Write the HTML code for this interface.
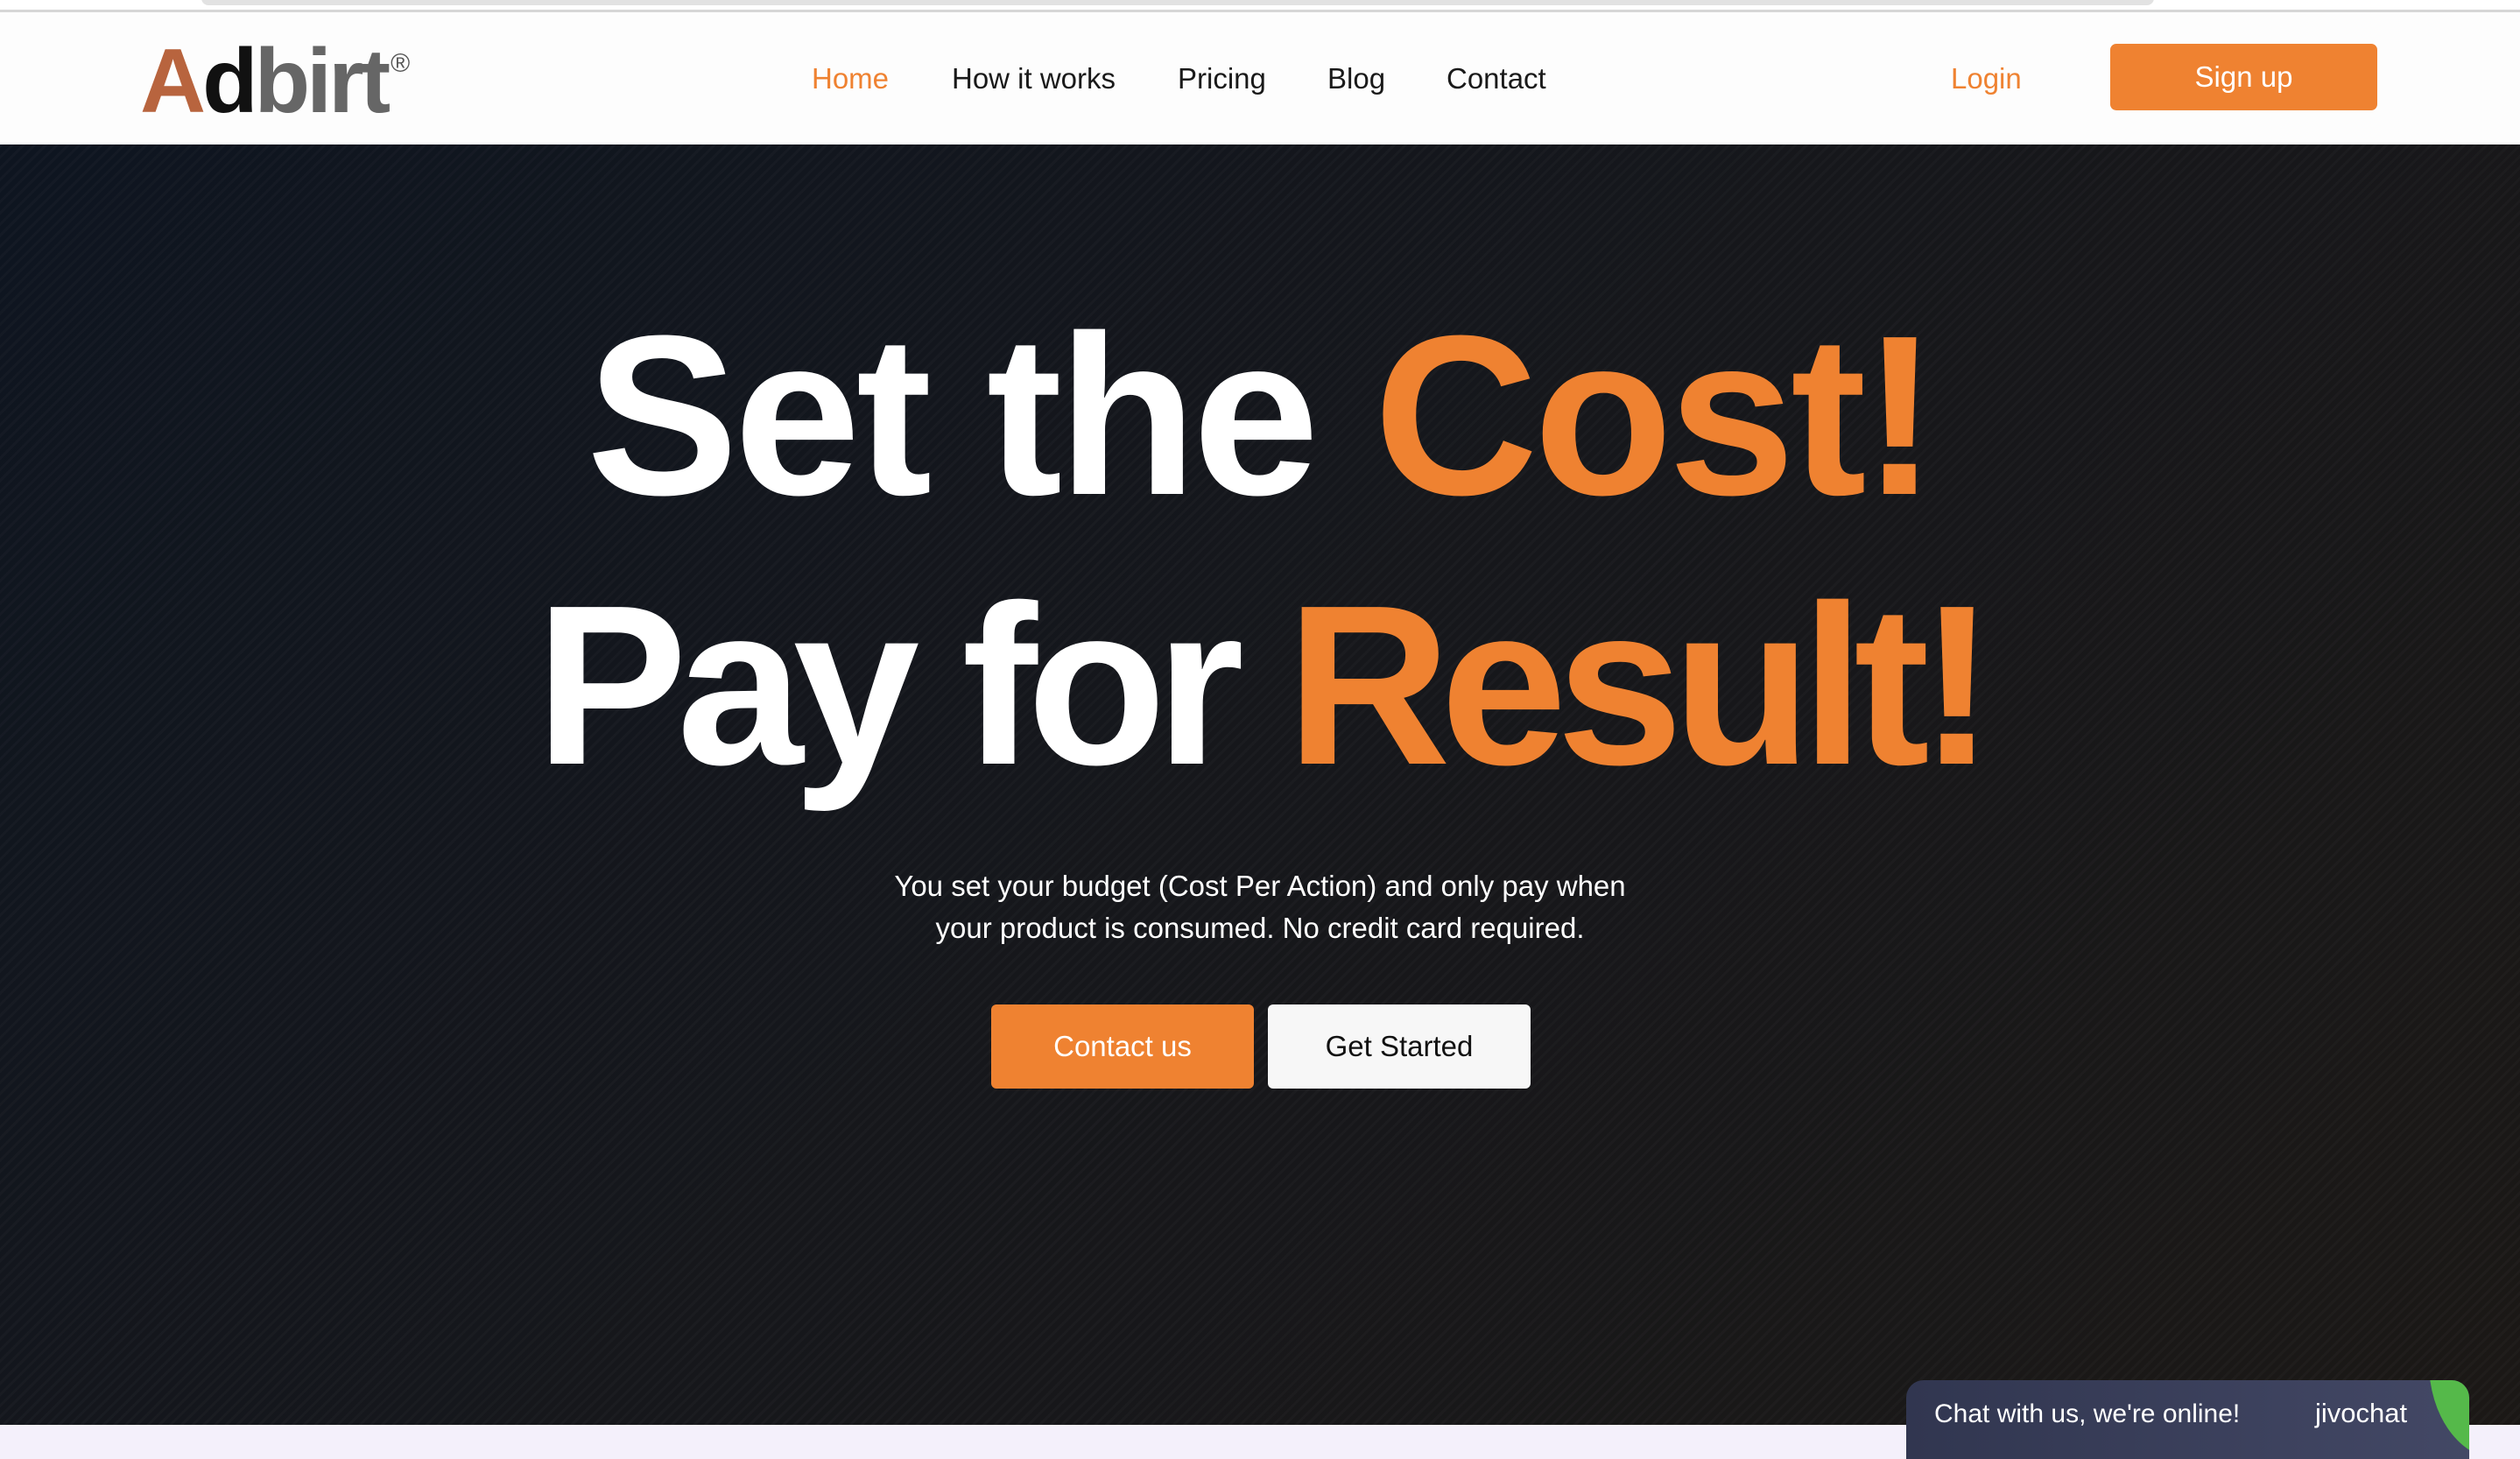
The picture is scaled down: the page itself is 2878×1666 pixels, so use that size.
<!DOCTYPE html>
<html><head><meta charset="utf-8"><style>
*{margin:0;padding:0;box-sizing:border-box}
body{width:2878px;height:1656px;overflow:hidden;position:relative;font-family:"Liberation Sans",sans-serif;background:#f4f0fb}
.top{position:absolute;left:0;top:0;width:2878px;height:14px;background:#fff;border-bottom:3px solid #d6d6d6}
.top .pill{position:absolute;left:230px;top:-10px;width:2230px;height:16px;background:#e2e2e2;border-radius:8px}
nav{position:absolute;left:0;top:14px;width:2878px;height:151px;background:#fdfdfd}
.logo{position:absolute;left:160px;top:20px;font-size:104px;font-weight:bold;letter-spacing:-4px;color:#666}
.logo .a{color:#b8643e}.logo .d{color:#111}
.logo sup{font-size:30px;font-weight:normal;color:#555;position:relative;top:-10px;margin-left:4px}
.nl{position:absolute;top:57px;font-size:33px;color:#1a1a1a}
.btn-s{position:absolute;left:2410px;top:36px;width:305px;height:76px;background:#ef8231;border-radius:7px;color:#fff;font-size:33px;text-align:center;line-height:76px}
.hero{position:absolute;left:0;top:165px;width:2878px;height:1462px;
background:repeating-linear-gradient(135deg,rgba(255,255,255,0.025) 0 3px,rgba(0,0,0,0) 3px 9px),linear-gradient(135deg,#0e1520 0%,#16171b 50%,#1b1816 100%)}
h1{position:absolute;left:0;width:2878px;text-align:center;color:#fff;font-weight:bold;font-size:260px;line-height:1}
h1 span{color:#ef8231}
p.sub{position:absolute;left:0;top:823px;width:2878px;text-align:center;color:#fff;font-size:33px;line-height:48px}
.b{position:absolute;top:982px;width:300px;height:96px;border-radius:6px;font-size:33px;text-align:center;line-height:96px}
.chat{position:absolute;left:2177px;top:1576px;width:643px;height:90px;border-radius:20px 20px 0 0;background:linear-gradient(90deg,#313650,#434865);overflow:hidden}
.chat .t{position:absolute;left:32px;top:22px;color:#fff;font-size:30px}
.chat .j{position:absolute;left:467px;top:20px;color:#fff;font-size:31px}
.chat .leaf{position:absolute;left:597px;top:-20px;width:80px;height:110px;background:#55b94a;border-radius:0 0 0 100%}
</style></head><body>
<div class="top"><div class="pill"></div></div>
<nav>
<div class="logo"><span class="a">A</span><span class="d">d</span>birt<sup>®</sup></div>
<div class="nl" style="left:927px;color:#ef8231">Home</div>
<div class="nl" style="left:1087px">How it works</div>
<div class="nl" style="left:1345px">Pricing</div>
<div class="nl" style="left:1516px">Blog</div>
<div class="nl" style="left:1652px">Contact</div>
<div class="nl" style="left:2228px;color:#ef8231">Login</div>
<div class="btn-s">Sign up</div>
</nav>
<div class="hero">
<h1 style="top:180px;letter-spacing:-5px">Set the <span>Cost!</span></h1>
<h1 style="top:488px;letter-spacing:-12px">Pay for <span>Result!</span></h1>
<p class="sub">You set your budget (Cost Per Action) and only pay when<br>your product is consumed. No credit card required.</p>
<div class="b" style="left:1132px;background:#ef8231;color:#fff">Contact us</div>
<div class="b" style="left:1448px;background:#f7f7f7;color:#111">Get Started</div>
</div>
<div class="chat"><div class="t">Chat with us, we're online!</div><div class="j">jivochat</div><div class="leaf"></div></div>
</body></html>
